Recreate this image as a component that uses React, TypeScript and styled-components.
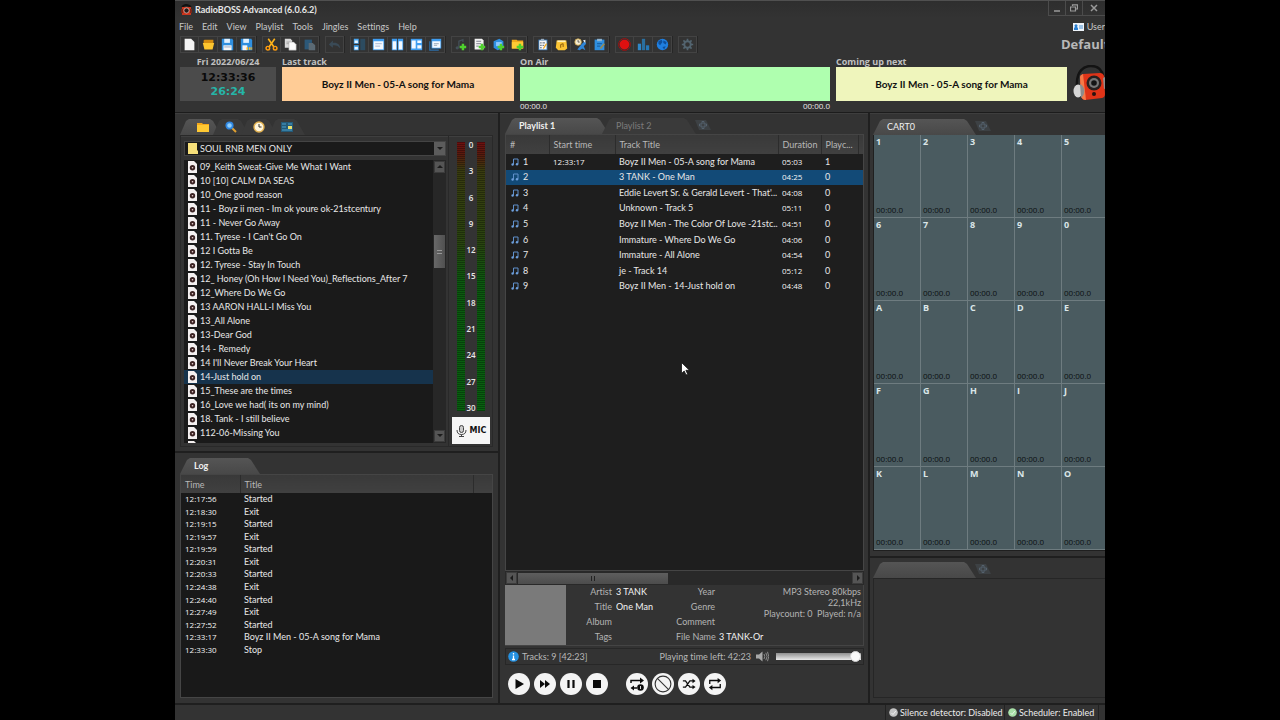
import React from "react";
import styled, { createGlobalStyle, css } from "styled-components";

const GlobalStyle = createGlobalStyle`
  *, *::before, *::after { box-sizing: border-box; }
  html, body, #root { height: 100%; }
  body {
    margin: 0;
    background: #000;
    color: #e8e8e8;
    font: 9px/12px Lato, "Open Sans", sans-serif;
    font-variant-ligatures: none;
    overflow: hidden;
  }
  button, select, input { font: inherit; color: inherit; margin: 0; padding: 0; border: 0; background: none; }
  ul, dl, dd { margin: 0; padding: 0; list-style: none; }
  svg { display: block; flex: none; }
`;

/* ---------- window frame ---------- */

const Stage = styled.div`
  height: 100%;
  padding: 0 175px;
`;

const Window = styled.div`
  height: 100%;
  display: flex;
  flex-direction: column;
  overflow: hidden;
  background: #333;
  border-top: 1px solid #505050;
`;

const TitleBar = styled.header`
  height: 17px;
  flex: none;
  display: flex;
  align-items: center;
  gap: 3px;
  padding-left: 6px;
  background: linear-gradient(#2e2e2e, #333);
`;

const AppTitle = styled.h1`
  flex: 1;
  margin: 0;
  font-size: 9px;
  line-height: 16px;
  font-weight: 700;
  color: #e8e8e8;
`;

const WindowButtons = styled.div`
  display: flex;
  align-self: flex-start;
`;

const WindowButton = styled.button<{ $wide?: boolean }>`
  width: ${(p) => (p.$wide ? 23 : 17)}px;
  height: 15px;
  display: grid;
  place-items: center;
  border: solid #4c4c4c;
  border-width: 0 0 1px 1px;
  color: #9a9a9a;
`;

const MenuBar = styled.nav`
  height: 18px;
  flex: none;
  display: flex;
  align-items: center;
  gap: 9px;
  padding-left: 4px;
  color: #c8c8c8;
`;

const MenuItem = styled.button`
  line-height: 14px;
  white-space: nowrap;
`;

const UserButton = styled.button`
  margin-left: auto;
  display: flex;
  align-items: center;
  gap: 3px;
  line-height: 14px;
`;

const ToolBar = styled.div`
  height: 18px;
  flex: none;
  display: flex;
  gap: 6px;
  padding-left: 5px;
`;

const ToolGroup = styled.div`
  display: flex;
  height: 17px;
  border: solid #434343;
  border-width: 1px 0 1px 1px;
  box-shadow: 1px 0 0 #262626;
`;

const ToolButton = styled.button`
  width: 19px;
  height: 15px;
  margin-left: -1px;
  border-left: 1px solid #434343;
  border-right: 1px solid #434343;
  display: grid;
  place-items: center;
  & + & { margin-left: 0; border-left: 0; }
`;

const ProfileName = styled.div`
  flex: 1;
  min-width: 0;
  display: flex;
  justify-content: flex-end;
  font: 700 13px/17px "Open Sans", sans-serif;
  color: #b8b8b8;

  span { width: 44px; overflow: hidden; white-space: nowrap; }
`;

/* ---------- now playing strip ---------- */

const NowStrip = styled.section`
  height: 59px;
  flex: none;
  display: grid;
  grid-template-columns: 96px 232fr 310fr 231fr 32px;
  column-gap: 6px;
  padding: 2px 0 0 5px;
  border-bottom: 1px solid #1c1c1c;
`;

const NowBlock = styled.div<{ $center?: boolean }>`
  display: flex;
  flex-direction: column;
  min-width: 0;
  text-align: ${(p) => (p.$center ? "center" : "left")};
`;

const NowLabel = styled.h2`
  margin: 0;
  font: 700 9px/11px "Open Sans", sans-serif;
  color: #c0c0c0;
`;

const NowBox = styled.div<{ $fill: string }>`
  height: 34px;
  display: grid;
  place-items: center;
  background: ${(p) => p.$fill};
  color: #111;
  font-size: 10px;
  font-weight: 700;
  white-space: nowrap;
`;

const ClockBox = styled.div`
  height: 34px;
  padding-top: 4px;
  background: #4b4b4b;
  font: 700 11px/14px "DejaVu Sans", sans-serif;
`;

const ClockLine = styled.div<{ $accent?: boolean }>`
  color: ${(p) => (p.$accent ? "#26b5a8" : "#0a0a0a")};
`;

const NowTimes = styled.div`
  display: flex;
  justify-content: space-between;
  font: 8px/10px "Open Sans", sans-serif;
  color: #e8e8e8;
`;

const LogoSlot = styled.div`
  padding-top: 9px;
  overflow: hidden;
`;

/* ---------- workspace ---------- */

const Workspace = styled.main`
  flex: 1;
  min-height: 0;
  display: grid;
  grid-template-columns: 323fr 370fr 237fr;
`;

const Column = styled.div<{ $rows: string }>`
  min-width: 0;
  min-height: 0;
  display: grid;
  grid-template-columns: minmax(0, 1fr);
  grid-template-rows: ${(p) => p.$rows};
  & + & { border-left: 2px solid #1f1f1f; }
`;

const Panel = styled.section<{ $pad: string }>`
  min-height: 0;
  display: flex;
  flex-direction: column;
  padding: ${(p) => p.$pad};
  border-top: 1px solid #3e3e3e;
  & + & { border-top: 2px solid #1f1f1f; }
`;

const TabRow = styled.div`
  height: 16px;
  flex: none;
  display: flex;
`;

const tabFill = css<{ $active?: boolean }>`
  background: ${(p) => (p.$active ? "linear-gradient(#555, #484848)" : "#3a3a3a")};
`;

const Tab = styled.button<{ $active?: boolean; $width: number; $slim?: boolean }>`
  ${tabFill}
  width: ${(p) => p.$width}px;
  height: 16px;
  margin-right: -7px;
  padding: 0 14px;
  text-align: left;
  line-height: 16px;
  white-space: nowrap;
  font-weight: ${(p) => (p.$active && !p.$slim ? 700 : 400)};
  color: ${(p) => (p.$active ? "#f0f0f0" : "#7c7c7c")};
  clip-path: polygon(10px 0, calc(100% - 12px) 0, calc(100% - 9px) 2px, 100% 100%, 0 100%, 7px 2px);
`;

const IconTab = styled.button<{ $active?: boolean; $first?: boolean }>`
  ${tabFill}
  width: ${(p) => (p.$first ? 41 : 36)}px;
  height: 16px;
  margin-right: -8px;
  padding-left: ${(p) => (p.$first ? 4 : 0)}px;
  display: grid;
  place-items: center;
  clip-path: polygon(9px 0, calc(100% - 11px) 0, calc(100% - 8px) 2px, 100% 100%, 0 100%, 6px 2px);
`;

const AddTab = styled.button`
  width: 16px;
  height: 10px;
  margin: 2px 0 0 6px;
  display: grid;
  place-items: center;
  background: #3d4144;
  color: #55626e;
  clip-path: polygon(0 0, 11px 0, 100% 100%, 4px 100%);
`;

/* ---------- library ---------- */

const LibraryFrame = styled.div`
  flex: 1;
  min-height: 0;
  display: grid;
  grid-template-columns: 1fr 43px;
  border: 1px solid #292929;
  box-shadow: inset 0 1px 0 #3f3f3f;
`;

const LibraryMain = styled.div`
  min-width: 0;
  min-height: 0;
  display: flex;
  flex-direction: column;
  gap: 4px;
  padding: 5px 2px 3px 3px;
  border-right: 1px solid #292929;
`;

const FolderPicker = styled.label`
  position: relative;
  height: 15px;
  flex: none;
  display: flex;
  align-items: center;
  background: #1a1a1a;
  border: 1px solid #444;

  > svg { position: absolute; left: 3px; top: 1px; pointer-events: none; }
`;

const FolderSelect = styled.select`
  appearance: none;
  width: 100%;
  height: 13px;
  padding-left: 15px;
  line-height: 13px;
  outline: 0;
`;

const DropArrow = styled.span`
  position: absolute;
  right: 0;
  top: 0;
  width: 11px;
  height: 13px;
  display: grid;
  place-items: center;
  background: #5c5c5c;
  color: #1d1d1d;
  pointer-events: none;
`;

const FileBox = styled.div`
  flex: 1;
  min-height: 0;
  display: flex;
  background: #1a1a1a;
`;

const FileList = styled.ul`
  flex: 1;
  min-width: 0;
  overflow: hidden;
`;

const FileRow = styled.button<{ $selected?: boolean }>`
  width: 100%;
  height: 14px;
  display: flex;
  align-items: center;
  gap: 3px;
  padding-left: 4px;
  line-height: 14px;
  white-space: nowrap;
  background: ${(p) => (p.$selected ? "#16334c" : "transparent")};
`;

const VScroll = styled.div`
  width: 13px;
  flex: none;
  display: flex;
  flex-direction: column;
  padding: 1px;
  background: #272727;
`;

const ScrollButton = styled.button`
  width: 11px;
  height: 12px;
  flex: none;
  display: grid;
  place-items: center;
  background: #555;
  border: 1px solid #3c3c3c;
  color: #1c1c1c;
`;

const VTrack = styled.div`
  flex: 1;
  padding-top: 62px;
`;

const VThumb = styled.div`
  height: 33px;
  display: grid;
  place-items: center;
  color: #999;
  background: linear-gradient(90deg, #686868, #505050);
`;

const MeterColumn = styled.div`
  display: flex;
  flex-direction: column;
  padding: 6px 2px 2px 3px;
`;

const Meter = styled.div`
  flex: 1;
  min-height: 0;
  display: grid;
  grid-template-columns: 8px 1fr 8px;
  padding: 0 5px;
`;

const MeterBar = styled.div`
  background:
    repeating-linear-gradient(rgba(0, 0, 0, 0.3) 0 1px, transparent 1px 2px),
    linear-gradient(#701010 0, #5a1a0e 12px, #3a3c10 28px, #2a4410 100px, #0c5a10 140px, #086010 100%);
`;

const MeterScale = styled.ul`
  display: flex;
  flex-direction: column;
  justify-content: space-between;
  text-align: center;
  font: 600 8px/6px "Open Sans", sans-serif;
`;

const MicButton = styled.button`
  height: 27px;
  margin-top: 6px;
  display: flex;
  align-items: center;
  justify-content: center;
  gap: 3px;
  background: #f6f6f6;
  color: #111;
  font: 700 8px/12px "DejaVu Sans", sans-serif;
`;

/* ---------- tables ---------- */

const TableFrame = styled.div<{ $fill: string }>`
  position: relative;
  flex: 1;
  min-height: 0;
  overflow: hidden;
  border: 1px solid #454545;
  background: ${(p) => p.$fill};
`;

const DataTable = styled.table<{ $height: number; $head: number }>`
  width: 100%;
  height: ${(p) => p.$height}px;
  table-layout: fixed;
  border-collapse: collapse;

  thead tr { height: ${(p) => p.$head}px; }
`;

const HeadCell = styled.th`
  padding: 0 4px;
  text-align: left;
  font-weight: 400;
  line-height: 17px;
  white-space: nowrap;
  overflow: hidden;
  color: #b8b8b8;
  background: linear-gradient(#393939, #404040);
  border-right: 1px solid #2c2c2c;
  &:last-child { border-right: 0; }
`;

const BodyRow = styled.tr<{ $selected?: boolean }>`
  background: ${(p) => (p.$selected ? "#124a77" : "transparent")};
`;

const Cell = styled.td<{ $time?: boolean; $tight?: boolean }>`
  padding: 0 ${(p) => (p.$tight ? 0 : 4)}px 0 4px;
  line-height: 12px;
  white-space: nowrap;
  overflow: hidden;
  ${(p) => p.$time && css`font-family: "Open Sans", sans-serif; font-size: 8px; color: #f4f4f4;`}
`;

const NumberCell = styled.div`
  display: flex;
  align-items: center;
  gap: 4px;
  padding-left: 1px;
`;

const Cursor = styled.div`
  position: absolute;
  left: 175px;
  top: 227px;
`;

const HScroll = styled.div`
  height: 14px;
  flex: none;
  display: flex;
  align-items: center;
  padding: 1px;
  background: #292929;
`;

const HTrack = styled.div`
  flex: 1;
  margin: 0 1px;
`;

const HThumb = styled.div`
  width: 45%;
  height: 11px;
  display: grid;
  place-items: center;
  color: #222;
  background: linear-gradient(#5e5e5e, #4c4c4c);
`;

/* ---------- track details ---------- */

const Details = styled.div`
  height: 61px;
  flex: none;
  display: grid;
  grid-template-columns: 61px 110px 1fr 99px;
  border: 1px solid #444;
  border-width: 0 1px 1px 0;
  color: #b4b4b4;
  white-space: nowrap;
`;

const Cover = styled.div`
  background: #7a7a7a;
`;

const FieldList = styled.dl<{ $label: number }>`
  display: grid;
  grid-template-columns: ${(p) => p.$label}px 1fr;
  grid-auto-rows: 15px;
  column-gap: 4px;
  line-height: 14px;
  min-width: 0;

  dt { text-align: right; }
  dd { overflow: hidden; color: #f4f4f4; }
`;

const Format = styled.div`
  padding: 1px 2px;
  text-align: right;
  line-height: 11px;

  p { margin: 0; white-space: pre; display: flex; justify-content: flex-end; }
`;

const InfoBar = styled.div`
  height: 17px;
  flex: none;
  display: flex;
  align-items: center;
  gap: 3px;
  margin-top: 2px;
  padding: 0 2px;
  border: 1px solid #272727;
  color: #b8b8b8;
`;

const TimeLeft = styled.span`
  margin-left: auto;
  margin-right: 2px;
`;

const Volume = styled.input`
  appearance: none;
  width: 85px;
  height: 11px;
  margin-left: 4px;
  outline: 0;

  &::-webkit-slider-runnable-track {
    height: 7px;
    background: linear-gradient(#8f8f8f, #e9e9e9);
  }
  &::-webkit-slider-thumb {
    appearance: none;
    width: 11px;
    height: 11px;
    margin-top: -2px;
    border-radius: 50%;
    background: #f8f8f8;
    border: 1px solid #d0d0d0;
  }
`;

const Transport = styled.div`
  height: 38px;
  flex: none;
  display: flex;
  align-items: center;
  justify-content: flex-start;
  gap: 18px;
  padding-left: 3px;
`;

const TransportGroup = styled.div`
  display: flex;
  gap: 4px;
`;

const RoundButton = styled.button`
  width: 22px;
  height: 22px;
  display: grid;
  place-items: center;
  border-radius: 50%;
  background: #f4f4f4;
  color: #0c0c0c;
`;

/* ---------- carts ---------- */

const CartGrid = styled.div`
  flex: 1;
  min-height: 0;
  display: grid;
  grid-template-columns: repeat(4, 47px) 1fr;
  grid-template-rows: repeat(5, 1fr);
  border: solid #1f1f1f;
  border-width: 0 0 1px 1px;
  background: #4a5b60;
`;

const Cart = styled.button`
  display: flex;
  flex-direction: column;
  justify-content: space-between;
  align-items: flex-start;
  padding: 1px 0 1px 2px;
  border: solid #6e7c80;
  border-width: 0 1px 1px 0;
  overflow: hidden;
  font-family: "Open Sans", sans-serif;
  &:nth-child(5n) { border-right: 0; }
`;

const CartKey = styled.span`
  line-height: 12px;
  font-weight: 700;
  color: #dbe6e8;
`;

const CartTime = styled.span`
  font-size: 8px;
  line-height: 12px;
  color: #0a1012;
`;

const EmptyFrame = styled.div`
  flex: 1;
  border: solid #262626;
  border-width: 1px 0 1px 1px;
`;

/* ---------- status bar ---------- */

const StatusBar = styled.footer`
  height: 17px;
  flex: none;
  display: flex;
  justify-content: flex-end;
  padding-right: 6px;
  border-top: 2px solid #1f1f1f;
  color: #ececec;
`;

const StatusCell = styled.div<{ $width: number }>`
  width: ${(p) => p.$width}px;
  display: flex;
  align-items: center;
  gap: 2px;
  padding-left: 3px;
  white-space: nowrap;
  border-left: 1px solid #222;
  &:last-child { border-right: 1px solid #222; }
`;

/* ---------- drawings ---------- */

type ArtProps = { size?: number; children: React.ReactNode };
const Art = ({ size = 13, children }: ArtProps) => (
  <svg width={size} height={size} viewBox="0 0 16 16" fill="none" aria-hidden="true">
    {children}
  </svg>
);

const plus = (x: number, y: number) => (
  <path d={`M${x} ${y - 4}v8M${x - 4} ${y}h8`} stroke="#4fd12e" strokeWidth="3" />
);

const art: Record<string, React.ReactNode> = {
  "New": <path d="M2 1h8l4 4v10H2z" fill="#f4f4f4" />,
  "Open": (<><path d="M2 3l1-1h11v5H2z" fill="#d48c10" /><path d="M1 6h14l-2 8H3z" fill="#fdc62f" /></>),
  "Save": (<><path d="M1 1h13l1 2v12H1z" fill="#2f8fe0" /><path d="M4 1h7v5H4z" fill="#dff0ff" /><path d="M3 9h10v6H3z" fill="#f6f6f6" /><path d="M4 11h8" stroke="#89b" /></>),
  "Save as": (<><path d="M1 1h13l1 2v12H1z" fill="#2f8fe0" /><path d="M4 1h7v5H4z" fill="#dff0ff" /><path d="M3 9h6v6H3z" fill="#f6f6f6" /><path d="M8 13h7" stroke="#ffb820" strokeWidth="3" strokeDasharray="2 1" /></>),
  "Cut": (<><path d="M4 1l7 10M12 1L5 11" stroke="#ffb31a" strokeWidth="2" /><circle cx="3.5" cy="12.5" r="2.2" stroke="#ff9c10" strokeWidth="1.8" /><circle cx="12.5" cy="12.5" r="2.2" stroke="#ff9c10" strokeWidth="1.8" /></>),
  "Copy": (<><path d="M1 1h7l2 2v9H1z" fill="#d9d9d9" /><path d="M3 5h4M3 7h4" stroke="#999" /><path d="M6 5h6l3 3v7H6z" fill="#fbfbfb" stroke="#999" strokeWidth=".6" /></>),
  "Paste": (<><path d="M2 2h9v12H2z" fill="#2c5878" /><path d="M7 6h5l3 3v6H7z" fill="#5b6a74" /></>),
  "Undo": <path d="M6 3L1 8l5 4V9c4-.5 7 1 9 4 0-5-4-8-9-7z" fill="#3a4a56" />,
  "Layout 1": (<><path d="M1 1h6v6H1zM1 9h6v6H1z" fill="#4aa7f0" /><path d="M2 3h4v3H2zM2 11h4v3H2z" fill="#e8f4ff" /><path d="M9 1h6v14H9z" fill="#2c4b60" /></>),
  "Layout 2": (<><path d="M1 1h14v14H1z" fill="#3f9df0" /><path d="M2 4h12v10H2z" fill="#f4f9ff" /><path d="M4 7h8M4 10h6" stroke="#9ac" /></>),
  "Layout 3": (<><path d="M1 1h6.500v14H1zM8.500 1H15v14H8.500z" fill="#3f9df0" /><path d="M2 4h4.500v10H2zM9.500 4H14v10H9.500z" fill="#f4f9ff" /></>),
  "Layout 4": (<><path d="M1 1h14v14H1z" fill="#3f9df0" /><path d="M2 3h5v10H2zM9 3h5v3H9zM9 9h5v4H9z" fill="#f4f9ff" /></>),
  "Layout 5": (<><path d="M3 1h12v12H3z" fill="#3f9df0" /><path d="M4 4h10v8H4z" fill="#f4f9ff" /><path d="M1 4v11h11" stroke="#2c6ea8" strokeWidth="1.500" /><path d="M6 7h6M6 9h4" stroke="#89a" /></>),
  "Add track": (<><path d="M6 12V4l5-2v3" stroke="#44515a" strokeWidth="1.500" /><circle cx="4" cy="12" r="2" fill="#44515a" />{plus(11, 11)}</>),
  "Add list": (<><path d="M2 1h9l2 2v11H2z" fill="#f2f2f2" /><path d="M4 4h6M4 7h6M4 10h3" stroke="#667" />{plus(11, 11)}</>),
  "Add web": (<><path d="M2 4l7-3 5 3v8l-7 3-5-3z" fill="#2f8fe0" /><path d="M5 5h7v5H5z" fill="#8cc8ff" />{plus(11, 11)}</>),
  "Add folder": (<><path d="M1 2h6l1 1h7v10H1z" fill="#f0a91c" /><path d="M1 5h14v8H1z" fill="#ffca35" />{plus(11, 11)}</>),
  "Report": (<><path d="M3 2h11v13H3z" fill="#3b7fc0" /><path d="M4 3h9v11H4z" fill="#f6f6f6" /><path d="M6 1h4v2H6z" fill="#9ab" /><path d="M5 6h2M5 9h2M5 12h2M8 6h3M8 9h2" stroke="#345" /><path d="M9 13l4-6" stroke="#f2a81c" strokeWidth="1.500" /></>),
  "Music folder": (<><path d="M2 3h12l1 10-3 2H4L1 12z" fill="#fcc534" /><path d="M7 12V8l3-1v4" stroke="#8a5a08" strokeWidth="1.200" /><path d="M3 4h10" stroke="#fff0b8" strokeWidth="2" /></>),
  "Generator": (<><path d="M4 14l5-6 4-4 2 3-3 3 2 5-4-2-3 2z" fill="#2f86d8" /><path d="M11 3l3-1v4z" fill="#e8f4ff" /><circle cx="5" cy="5" r="4" fill="#f4ecd2" stroke="#c9a040" /><path d="M5 2.500V5h2" stroke="#444" /></>),
  "Notes": (<><path d="M2 2h12v13H2z" fill="#2f8fe0" /><path d="M5 1h6v3H5z" fill="#8fb4d0" /><path d="M5 7h6M5 10h4" stroke="#0c4f90" /><path d="M9 13l5-6" stroke="#9a8a50" strokeWidth="2" /></>),
  "Record": (<><circle cx="8" cy="8" r="7.300" stroke="#a01010" strokeWidth="1.200" /><circle cx="8" cy="8" r="6" fill="#e01010" /></>),
  "Statistics": (<><path d="M1 7h4v8H1z" fill="#2f86c8" /><path d="M6 1h4v14H6z" fill="#2a6f9f" /><path d="M11 9h4v6h-4z" fill="#2478b8" /></>),
  "Web": (<><circle cx="8" cy="8" r="7" fill="#1f7fe0" /><path d="M3 4l4-2 1 3-3 4-2-2zM9 3l4 2-1 3-3-2zM8 11l4-1-2 4z" fill="#0d4f9c" /></>),
  "Options": (<><circle cx="8" cy="8" r="4" stroke="#536570" strokeWidth="2.400" /><path d="M8 1v3M8 12v3M1 8h3M12 8h3M3 3l2 2M11 11l2 2M13 3l-2 2M5 11l-2 2" stroke="#536570" strokeWidth="2" /></>),
};

const toolGroups = [
  ["New", "Open", "Save", "Save as"],
  ["Cut", "Copy", "Paste"],
  ["Undo"],
  ["Layout 1", "Layout 2", "Layout 3", "Layout 4", "Layout 5"],
  ["Add track", "Add list", "Add web", "Add folder"],
  ["Report", "Music folder", "Generator", "Notes"],
  ["Record", "Statistics", "Web"],
  ["Options"],
];

const AppIcon = () => (
  <svg width="11" height="12" viewBox="0 0 11 12" aria-hidden="true">
    <path d="M1 3Q5 -1 10 3" stroke="#111" strokeWidth="2" fill="none" />
    <path d="M1 3h9v8H1z" fill="#c8341c" />
    <circle cx="5.500" cy="6.500" r="2.600" fill="#241c1c" stroke="#e8c8c0" strokeWidth=".7" />
    <path d="M0 5h2v4H0zM9 5h2v4H9z" fill="#7c2416" />
  </svg>
);

const SpeakerLogo = () => (
  <svg width="34" height="36" viewBox="0 0 34 36" aria-hidden="true">
    <path d="M4 21C3 6 11 1 18 1s11 4 12 10" stroke="#131313" strokeWidth="2.500" fill="none" />
    <path d="M7 12q0-2 3-3l17-1q3 0 4 3l1 18q0 3-3 4l-17 2q-3 0-4-4z" fill="#e03418" />
    <path d="M7 12q0-2 3-3l3 26q-4 0-5-4z" fill="#f47a48" />
    <circle cx="21" cy="18" r="7.500" fill="#28201f" />
    <circle cx="21" cy="18" r="5" fill="#767676" />
    <circle cx="21" cy="18" r="2.800" fill="#141414" />
    <circle cx="21" cy="29" r="2" fill="#2a1210" />
    <ellipse cx="5" cy="26" rx="4.500" ry="6.500" fill="#d6d6d6" />
    <path d="M7 19c5 2 6 10 1 14z" fill="#8c8c8c" />
    <path d="M30 13l4-2v12l-3 1z" fill="#8c8c8c" />
  </svg>
);

const FileIcon = () => (
  <svg width="9" height="12" viewBox="0 0 9 12" aria-hidden="true">
    <path d="M0 0h6l3 3v9H0z" fill="#f4f0f0" />
    <circle cx="4.500" cy="6.800" r="2.700" fill="#3c2424" />
    <circle cx="4.500" cy="6.800" r="0.800" fill="#f0d8d8" />
  </svg>
);

const NoteIcon = () => (
  <svg width="8" height="8" viewBox="0 0 8 8" fill="none" aria-hidden="true">
    <path d="M2.500 6.500V1h4.500v5" stroke="#5f8fca" />
    <circle cx="1.600" cy="6.500" r="1.200" fill="#6d9fdc" />
    <circle cx="6" cy="6.200" r="1.200" fill="#6d9fdc" />
  </svg>
);

const Arrow = ({ dir }: { dir: "up" | "down" | "left" | "right" }) => {
  const d = { up: "M0 4l3-3 3 3z", down: "M0 1l3 3 3-3z", left: "M4 0L1 3l3 3z", right: "M2 0l3 3-3 3z" }[dir];
  return (
    <svg width="6" height="6" viewBox="0 0 6 6" aria-hidden="true">
      <path d={d} fill="currentColor" />
    </svg>
  );
};

const PlusIcon = () => (
  <svg width="8" height="8" viewBox="0 0 8 8" fill="none" aria-hidden="true">
    <path d="M3 0.500h2v2.500h2.500v2H5v2.500H3V5H.5V3H3z" stroke="currentColor" />
  </svg>
);

const Dot = ({ fill }: { fill: string }) => (
  <svg width="9" height="9" viewBox="0 0 9 9" fill="none" aria-hidden="true">
    <circle cx="4.500" cy="4.500" r="4.300" fill={fill} />
    <path d="M2.500 5l1.500 1.500L6.800 3" stroke="#fff" strokeOpacity=".7" />
  </svg>
);

/* ---------- data ---------- */

const files = [
  "09_Keith Sweat-Give Me What I Want",
  "10 [10] CALM DA SEAS",
  "10_One good reason",
  "11 - Boyz ii men - Im ok youre ok-21stcentury",
  "11 - Never Go Away",
  "11. Tyrese - I Can't Go On",
  "12 I Gotta Be",
  "12. Tyrese - Stay In Touch",
  "12_ Honey (Oh How I Need You)_Reflections_After 7",
  "12_Where Do We Go",
  "13 AARON HALL-I Miss You",
  "13_All Alone",
  "13-Dear God",
  "14 - Remedy",
  "14 I'll Never Break Your Heart",
  "14-Just hold on",
  "15_These are the times",
  "16_Love we had( its on my mind)",
  "18. Tank - I still believe",
  "112-06-Missing You",
  "",
];

const log = [
  ["12:17:56", "Started"],
  ["12:18:30", "Exit"],
  ["12:19:15", "Started"],
  ["12:19:57", "Exit"],
  ["12:19:59", "Started"],
  ["12:20:31", "Exit"],
  ["12:20:33", "Started"],
  ["12:24:38", "Exit"],
  ["12:24:40", "Started"],
  ["12:27:49", "Exit"],
  ["12:27:52", "Started"],
  ["12:33:17", "Boyz II Men - 05-A song for Mama"],
  ["12:33:30", "Stop"],
];

const tracks = [
  ["12:33:17", "Boyz II Men - 05-A song for Mama", "05:03", "1"],
  ["", "3 TANK - One Man", "04:25", "0"],
  ["", "Eddie Levert Sr. & Gerald Levert - That'...", "04:08", "0"],
  ["", "Unknown - Track 5", "05:11", "0"],
  ["", "Boyz II Men - The Color Of Love -21stc...", "04:51", "0"],
  ["", "Immature - Where Do We Go", "04:06", "0"],
  ["", "Immature - All Alone", "04:54", "0"],
  ["", "je - Track 14", "05:12", "0"],
  ["", "Boyz II Men - 14-Just hold on", "04:48", "0"],
];

const cartKeys = "1234567890ABCDEFGHIJKLMNO".split("");
const menus = ["File", "Edit", "View", "Playlist", "Tools", "Jingles", "Settings", "Help"];
const scale = [0, 3, 6, 9, 12, 15, 18, 21, 24, 27, 30];

/* ---------- sections ---------- */

const Header = () => (
  <>
    <TitleBar>
      <AppIcon />
      <AppTitle>RadioBOSS Advanced (6.0.6.2)</AppTitle>
      <WindowButtons>
        <WindowButton aria-label="Minimize">
          <svg width="8" height="8" viewBox="0 0 8 8"><path d="M1 7h6" stroke="currentColor" strokeWidth="1.500" /></svg>
        </WindowButton>
        <WindowButton aria-label="Restore">
          <svg width="8" height="8" viewBox="0 0 8 8" fill="none"><path d="M2.500 2V.8h5V5H6M.5 3h5v4h-5z" stroke="currentColor" strokeWidth="1.200" /></svg>
        </WindowButton>
        <WindowButton $wide aria-label="Close">
          <svg width="8" height="8" viewBox="0 0 8 8"><path d="M1 1l6 6M7 1L1 7" stroke="currentColor" strokeWidth="1.500" /></svg>
        </WindowButton>
      </WindowButtons>
    </TitleBar>
    <MenuBar>
      {menus.map((m) => <MenuItem key={m}>{m}</MenuItem>)}
      <UserButton>
        <svg width="11" height="8" viewBox="0 0 11 8" aria-hidden="true">
          <path d="M0 0h11v8H0z" fill="#eef4fa" />
          <path d="M1 7V5l1-1a1.500 1.500 0 1 1 2 0l1 1v2z" fill="#2a7fd0" />
          <path d="M6 3h4M6 5h4" stroke="#4a90d0" />
        </svg>
        User
      </UserButton>
    </MenuBar>
    <ToolBar>
      {toolGroups.map((group) => (
        <ToolGroup key={group[0]}>
          {group.map((name) => (
            <ToolButton key={name} aria-label={name}><Art>{art[name]}</Art></ToolButton>
          ))}
        </ToolGroup>
      ))}
      <ProfileName><span>Default</span></ProfileName>
    </ToolBar>
    <NowStrip>
      <NowBlock $center>
        <NowLabel>Fri 2022/06/24</NowLabel>
        <ClockBox>
          <ClockLine>12:33:36</ClockLine>
          <ClockLine $accent>26:24</ClockLine>
        </ClockBox>
      </NowBlock>
      <NowBlock>
        <NowLabel>Last track</NowLabel>
        <NowBox $fill="#ffcc96">Boyz II Men - 05-A song for Mama</NowBox>
      </NowBlock>
      <NowBlock>
        <NowLabel>On Air</NowLabel>
        <NowBox $fill="#afffaf" />
        <NowTimes><span>00:00.0</span><span>00:00.0</span></NowTimes>
      </NowBlock>
      <NowBlock>
        <NowLabel>Coming up next</NowLabel>
        <NowBox $fill="#eff5bc">Boyz II Men - 05-A song for Mama</NowBox>
      </NowBlock>
      <LogoSlot><SpeakerLogo /></LogoSlot>
    </NowStrip>
  </>
);

const Library = () => (
  <Panel $pad="5px 5px 4px 5px">
    <TabRow>
      <IconTab $active $first aria-label="Files">
        <svg width="12" height="9" viewBox="0 0 12 9"><path d="M0 0h5l1 1h6v8H0z" fill="#f5a81a" /><path d="M0 2h12v7H0z" fill="#ffc933" /></svg>
      </IconTab>
      <IconTab aria-label="Search">
        <svg width="12" height="12" viewBox="0 0 12 12"><path d="M6 6l5 5" stroke="#e0a030" strokeWidth="2" /><circle cx="4.500" cy="4.500" r="3.200" fill="#8fd0ff" stroke="#2f86e0" strokeWidth="1.800" /></svg>
      </IconTab>
      <IconTab aria-label="Scheduler">
        <svg width="12" height="12" viewBox="0 0 12 12"><circle cx="6" cy="6" r="5" fill="#fff6dc" stroke="#e0b050" strokeWidth="1.400" /><path d="M6 3v3h2.500" stroke="#333" fill="none" /></svg>
      </IconTab>
      <IconTab aria-label="Cart sets">
        <svg width="12" height="10" viewBox="0 0 12 10"><path d="M0 0h12v10H0z" fill="#245a78" /><path d="M1 2h4M1 5h4M1 8h10M7 2h4" stroke="#4aa0cc" /><path d="M7 4h4v3H7z" fill="#e8e070" /></svg>
      </IconTab>
    </TabRow>
    <LibraryFrame>
      <LibraryMain>
        <FolderPicker>
          <FolderSelect aria-label="Folder"><option>SOUL RNB MEN ONLY</option></FolderSelect>
          <svg width="10" height="11" viewBox="0 0 10 11"><path d="M0 0h9v7l1 1v3H0z" fill="#f7e07a" /></svg>
          <DropArrow><Arrow dir="down" /></DropArrow>
        </FolderPicker>
        <FileBox>
          <FileList>
            {files.map((f) => (
              <li key={f}>
                <FileRow $selected={f === "14-Just hold on"}><FileIcon />{f}</FileRow>
              </li>
            ))}
          </FileList>
          <VScroll>
            <ScrollButton aria-label="Scroll up"><Arrow dir="up" /></ScrollButton>
            <VTrack>
              <VThumb><svg width="5" height="4" viewBox="0 0 5 4"><path d="M0 .5h5M0 3.500h5" stroke="currentColor" /></svg></VThumb>
            </VTrack>
            <ScrollButton aria-label="Scroll down"><Arrow dir="down" /></ScrollButton>
          </VScroll>
        </FileBox>
      </LibraryMain>
      <MeterColumn>
        <Meter>
          <MeterBar />
          <MeterScale>{scale.map((n) => <li key={n}>{n}</li>)}</MeterScale>
          <MeterBar />
        </Meter>
        <MicButton>
          <svg width="11" height="12" viewBox="0 0 11 12" fill="none" aria-hidden="true">
            <rect x="3.500" y=".5" width="4" height="7" rx="2" fill="#ccc" stroke="#444" />
            <path d="M1 5q0 4.500 4.500 4.500T10 5M5.500 9.500V12M3 11.500h5" stroke="#444" />
          </svg>
          MIC
        </MicButton>
      </MeterColumn>
    </LibraryFrame>
  </Panel>
);

const Log = () => (
  <Panel $pad="5px 5px 5px 5px">
    <TabRow><Tab $active $width={80}>Log</Tab></TabRow>
    <TableFrame $fill="#191919">
      <DataTable $height={181} $head={18}>
        <colgroup><col style={{ width: 59 }} /><col /><col style={{ width: 19 }} /></colgroup>
        <thead><tr><HeadCell>Time</HeadCell><HeadCell>Title</HeadCell><HeadCell aria-label="Spacer" /></tr></thead>
        <tbody>
          {log.map(([time, title]) => (
            <BodyRow key={time}><Cell $time>{time}</Cell><Cell colSpan={2}>{title}</Cell></BodyRow>
          ))}
        </tbody>
      </DataTable>
    </TableFrame>
  </Panel>
);

const Playlist = () => (
  <Panel $pad="4px 4px 0 5px">
    <TabRow>
      <Tab $active $width={104}>Playlist 1</Tab>
      <Tab $width={94}>Playlist 2</Tab>
      <AddTab aria-label="Add playlist"><PlusIcon /></AddTab>
    </TabRow>
    <TableFrame $fill="#1e1e1e">
      <DataTable $height={159} $head={19}>
        <colgroup>
          <col style={{ width: 43 }} /><col style={{ width: 66 }} /><col />
          <col style={{ width: 43 }} /><col style={{ width: 37 }} /><col style={{ width: 5 }} />
        </colgroup>
        <thead>
          <tr>
            <HeadCell>#</HeadCell><HeadCell>Start time</HeadCell><HeadCell>Track Title</HeadCell>
            <HeadCell>Duration</HeadCell><HeadCell>Playc...</HeadCell><HeadCell aria-label="More" />
          </tr>
        </thead>
        <tbody>
          {tracks.map(([start, title, duration, count], i) => (
            <BodyRow key={title} $selected={i === 1}>
              <Cell><NumberCell><NoteIcon />{i + 1}</NumberCell></Cell>
              <Cell $time>{start}</Cell><Cell $tight>{title}</Cell>
              <Cell $time>{duration}</Cell><Cell colSpan={2}>{count}</Cell>
            </BodyRow>
          ))}
        </tbody>
      </DataTable>
      <Cursor>
        <svg width="10" height="14" viewBox="0 0 10 14" aria-hidden="true">
          <path d="M.5 .5v11l2.700-2.500 1.800 4 1.700-.8-1.800-3.900h3.600z" fill="#fff" stroke="#111" strokeWidth=".8" />
        </svg>
      </Cursor>
    </TableFrame>
    <HScroll>
      <ScrollButton aria-label="Scroll left"><Arrow dir="left" /></ScrollButton>
      <HTrack>
        <HThumb><svg width="4" height="5" viewBox="0 0 4 5"><path d="M.5 0v5M3.500 0v5" stroke="currentColor" /></svg></HThumb>
      </HTrack>
      <ScrollButton aria-label="Scroll right"><Arrow dir="right" /></ScrollButton>
    </HScroll>
    <Details>
      <Cover />
      <FieldList $label={46}>
        <dt>Artist</dt><dd>3 TANK</dd>
        <dt>Title</dt><dd>One Man</dd>
        <dt>Album</dt><dd />
        <dt>Tags</dt><dd />
      </FieldList>
      <FieldList $label={39}>
        <dt>Year</dt><dd />
        <dt>Genre</dt><dd />
        <dt>Comment</dt><dd />
        <dt>File Name</dt><dd>3 TANK-Or</dd>
      </FieldList>
      <Format>
        <p>MP3 Stereo 80kbps</p>
        <p>22,1kHz</p>
        <p>{"Playcount: 0  Played: n/a"}</p>
      </Format>
    </Details>
    <InfoBar>
      <svg width="11" height="11" viewBox="0 0 11 11" aria-hidden="true">
        <circle cx="5.500" cy="5.500" r="5.300" fill="#2590e0" />
        <path d="M5.500 2v1.500M5.500 4.500v4M4 8.500h3" stroke="#fff" strokeWidth="1.300" />
      </svg>
      <span>Tracks: 9 [42:23]</span>
      <TimeLeft>Playing time left: 42:23</TimeLeft>
      <svg width="13" height="11" viewBox="0 0 13 11" fill="none" aria-hidden="true">
        <path d="M0 3.500h3L6.500 .5v10L3 7.500H0z" fill="#a8a8a8" />
        <path d="M8 3q1.500 2.500 0 5M9.800 1.800q2.500 3.700 0 7.400M11.500 .8q2.500 4.700 0 9.400" stroke="#8c8c8c" />
      </svg>
      <Volume type="range" aria-label="Volume" min={0} max={100} defaultValue={100} />
    </InfoBar>
    <Transport>
      <TransportGroup>
        <RoundButton aria-label="Play"><Art size={16}><path d="M4.500 3v10l8.500-5z" fill="currentColor" /></Art></RoundButton>
        <RoundButton aria-label="Next"><Art size={16}><path d="M3 4v8l5-4zM8 4v8l5-4z" fill="currentColor" /></Art></RoundButton>
        <RoundButton aria-label="Pause"><Art size={16}><path d="M5.500 4v8M10.500 4v8" stroke="currentColor" strokeWidth="2.200" /></Art></RoundButton>
        <RoundButton aria-label="Stop"><Art size={16}><path d="M4 4h8v8H4z" fill="currentColor" /></Art></RoundButton>
      </TransportGroup>
      <TransportGroup>
        <RoundButton aria-label="Repeat track">
          <Art size={16}>
            <path d="M2 7V4.500h10M4 12h4" stroke="currentColor" strokeWidth="1.500" />
            <path d="M11 1.500l4 3-4 3zM5 9.500L1.500 12 5 14.500z" fill="currentColor" />
            <circle cx="11.500" cy="11.500" r="3.300" fill="currentColor" />
            <path d="M11.500 10v3" stroke="#ddd" />
          </Art>
        </RoundButton>
        <RoundButton aria-label="No loop"><Art size={18}><circle cx="8" cy="8" r="7" stroke="#333" /><path d="M3 3l10 10" stroke="#333" /></Art></RoundButton>
        <RoundButton aria-label="Shuffle">
          <Art size={14}>
            <path d="M1 4.500h3l5 7h4M1 11.500h3l5-7h4" stroke="currentColor" strokeWidth="1.500" />
            <path d="M12 2l3.500 2.500L12 7zM12 9l3.500 2.500L12 14z" fill="currentColor" />
          </Art>
        </RoundButton>
        <RoundButton aria-label="Repeat">
          <Art size={14}>
            <path d="M2 8V4h10M14 8v4H4" stroke="currentColor" strokeWidth="1.500" />
            <path d="M11 1l4 3-4 3zM5 9l-4 3 4 3z" fill="currentColor" />
          </Art>
        </RoundButton>
      </TransportGroup>
    </Transport>
  </Panel>
);

const Carts = () => (
  <>
    <Panel $pad="5px 0 5px 3px">
      <TabRow>
        <Tab $active $slim $width={103}>CART0</Tab>
        <AddTab aria-label="Add cart"><PlusIcon /></AddTab>
      </TabRow>
      <CartGrid>
        {cartKeys.map((k) => (
          <Cart key={k}><CartKey>{k}</CartKey><CartTime>00:00.0</CartTime></Cart>
        ))}
      </CartGrid>
    </Panel>
    <Panel $pad="4px 0 5px 3px">
      <TabRow>
        <Tab $active $width={103} aria-label="Panel" />
        <AddTab aria-label="Add panel"><PlusIcon /></AddTab>
      </TabRow>
      <EmptyFrame />
    </Panel>
  </>
);

export default function App() {
  return (
    <>
      <GlobalStyle />
      <Stage>
        <Window>
          <Header />
          <Workspace>
            <Column $rows="338fr 252fr"><Library /><Log /></Column>
            <Column $rows="1fr"><Playlist /></Column>
            <Column $rows="443fr 147fr"><Carts /></Column>
          </Workspace>
          <StatusBar>
            <StatusCell $width={119}><Dot fill="#c4c4c4" />Silence detector: Disabled</StatusCell>
            <StatusCell $width={95}><Dot fill="#a8e0a8" />Scheduler: Enabled</StatusCell>
          </StatusBar>
        </Window>
      </Stage>
    </>
  );
}
